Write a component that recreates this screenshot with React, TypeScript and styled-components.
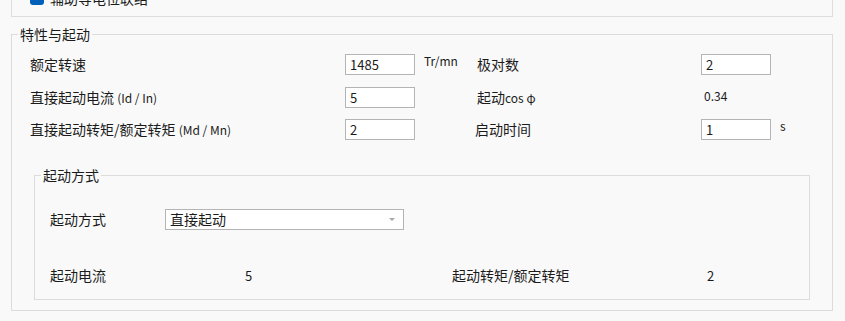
import React from "react";
import styled, { createGlobalStyle } from "styled-components";

const GlobalStyle = createGlobalStyle`
  html, body {
    margin: 0;
    padding: 0;
    background: #f9f9f9;
  }
  body {
    font-family: "Noto Sans CJK SC", "Liberation Sans", sans-serif;
    font-size: 14px;
    color: #1b1b1b;
    overflow: hidden;
  }
`;

const Page = styled.div`
  width: 845px;
  height: 321px;
  overflow: hidden;
  background: #f9f9f9;
`;

const TopGroup = styled.div`
  margin: 0 12px 0 11px;
  height: 16px;
  border: 1px solid #dedede;
  border-top: none;
  overflow: hidden;
`;

const CheckRow = styled.div`
  display: flex;
  align-items: center;
  gap: 6px;
  margin: -10px 0 0 18px;
  line-height: 16px;
`;

const CheckBox = styled.span`
  width: 14px;
  height: 14px;
  border-radius: 3px;
  background: #005fb8;
`;

const Group = styled.fieldset<{ $inner?: boolean }>`
  margin: ${({ $inner }) => ($inner ? "27px 22px 10px 22px" : "9px 12px 0 11px")};
  padding: 0;
  border: 1px solid #dcdcdc;
  min-width: 0;
`;

const Legend = styled.legend`
  margin-left: 6px;
  padding: 0 2px;
  line-height: 17px;
  font-size: 14px;
`;

const InnerBody = styled.div`
  padding: 0 0 13px 15px;
`;

const FieldGrid = styled.div`
  display: grid;
  grid-template-columns: 315px 70px 62px 224px 70px auto;
  grid-auto-rows: 21px;
  row-gap: 11.5px;
  margin: 11px 0 0 18px;
  align-items: center;
`;

const Label = styled.span<{ $shift?: number }>`
  white-space: nowrap;
  line-height: 17px;
  margin-left: ${({ $shift }) => $shift ?? 0}px;
`;

const Latin = styled.span`
  font-size: 12px;
`;

const Unit = styled.span`
  align-self: start;
  padding-left: 9px;
  line-height: 14px;
  font-size: 12px;
`;

const Value = styled.span<{ $shift?: number }>`
  padding-left: ${({ $shift }) => $shift ?? 0}px;
  line-height: 16px;
  font-size: 12px;
  margin-top: -3px;
`;

const TextBox = styled.div`
  box-sizing: border-box;
  width: 70px;
  height: 21px;
  border: 1px solid #b4b4b4;
  background: #ffffff;
  padding: 0 4px;
  line-height: 19px;
  font-size: 13px;
`;

const InnerRow = styled.div<{ $top: number }>`
  display: flex;
  align-items: center;
  height: 21px;
  margin-top: ${({ $top }) => $top}px;
`;

const Cell = styled.span<{ $width: number; $small?: boolean }>`
  width: ${({ $width }) => $width}px;
  flex: none;
  white-space: nowrap;
  line-height: 17px;
  font-size: ${({ $small }) => ($small ? "13px" : "14px")};
`;

const Select = styled.div`
  box-sizing: border-box;
  width: 239px;
  height: 21px;
  display: flex;
  align-items: center;
  justify-content: space-between;
  border: 1px solid #b4b4b4;
  background: #ffffff;
  padding: 0 8px 0 4px;
  line-height: 19px;
`;

const Arrow = styled.span`
  width: 0;
  height: 0;
  border-left: 3px solid transparent;
  border-right: 3px solid transparent;
  border-top: 3px solid #a8a8a8;
`;

export default function App() {
  return (
    <Page>
      <GlobalStyle />
      <TopGroup>
        <CheckRow>
          <CheckBox />
          <span>辅助等电位联结</span>
        </CheckRow>
      </TopGroup>

      <Group>
        <Legend>特性与起动</Legend>
        <FieldGrid>
          <Label>额定转速</Label>
          <TextBox>1485</TextBox>
          <Unit>Tr/mn</Unit>
          <Label>极对数</Label>
          <TextBox>2</TextBox>
          <span />

          <Label>
            直接起动电流 <Latin>(Id / In)</Latin>
          </Label>
          <TextBox>5</TextBox>
          <span />
          <Label>
            起动<Latin>cos φ</Latin>
          </Label>
          <Value $shift={3}>0.34</Value>
          <span />

          <Label>
            直接起动转矩/额定转矩 <Latin>(Md / Mn)</Latin>
          </Label>
          <TextBox>2</TextBox>
          <span />
          <Label $shift={-2}>启动时间</Label>
          <TextBox>1</TextBox>
          <Unit>s</Unit>
        </FieldGrid>

        <Group $inner>
          <Legend>起动方式</Legend>
          <InnerBody>
            <InnerRow $top={25}>
              <Cell $width={115}>起动方式</Cell>
              <Select>
                <span>直接起动</span>
                <Arrow />
              </Select>
            </InnerRow>
            <InnerRow $top={35}>
              <Cell $width={195}>起动电流</Cell>
              <Cell $width={207} $small>5</Cell>
              <Cell $width={255}>起动转矩/额定转矩</Cell>
              <Cell $width={40} $small>2</Cell>
            </InnerRow>
          </InnerBody>
        </Group>
      </Group>
    </Page>
  );
}
